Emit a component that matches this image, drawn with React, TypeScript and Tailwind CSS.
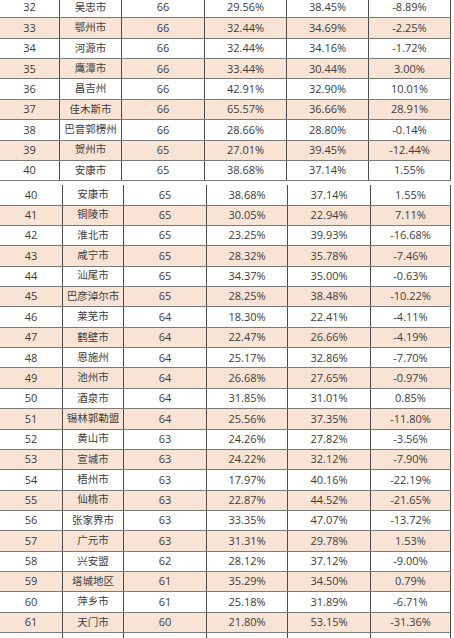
import React from "react";

type Row = [string, string, string, string, string, string];

const top: Row[] = [
  ["32", "吴忠市", "66", "29.56%", "38.45%", "-8.89%"],
  ["33", "鄂州市", "66", "32.44%", "34.69%", "-2.25%"],
  ["34", "河源市", "66", "32.44%", "34.16%", "-1.72%"],
  ["35", "鹰潭市", "66", "33.44%", "30.44%", "3.00%"],
  ["36", "昌吉州", "66", "42.91%", "32.90%", "10.01%"],
  ["37", "佳木斯市", "66", "65.57%", "36.66%", "28.91%"],
  ["38", "巴音郭楞州", "66", "28.66%", "28.80%", "-0.14%"],
  ["39", "贺州市", "65", "27.01%", "39.45%", "-12.44%"],
  ["40", "安康市", "65", "38.68%", "37.14%", "1.55%"],
];

const bottom: Row[] = [
  ["40", "安康市", "65", "38.68%", "37.14%", "1.55%"],
  ["41", "铜陵市", "65", "30.05%", "22.94%", "7.11%"],
  ["42", "淮北市", "65", "23.25%", "39.93%", "-16.68%"],
  ["43", "咸宁市", "65", "28.32%", "35.78%", "-7.46%"],
  ["44", "汕尾市", "65", "34.37%", "35.00%", "-0.63%"],
  ["45", "巴彦淖尔市", "65", "28.25%", "38.48%", "-10.22%"],
  ["46", "莱芜市", "64", "18.30%", "22.41%", "-4.11%"],
  ["47", "鹤壁市", "64", "22.47%", "26.66%", "-4.19%"],
  ["48", "恩施州", "64", "25.17%", "32.86%", "-7.70%"],
  ["49", "池州市", "64", "26.68%", "27.65%", "-0.97%"],
  ["50", "酒泉市", "64", "31.85%", "31.01%", "0.85%"],
  ["51", "锡林郭勒盟", "64", "25.56%", "37.35%", "-11.80%"],
  ["52", "黄山市", "63", "24.26%", "27.82%", "-3.56%"],
  ["53", "宣城市", "63", "24.22%", "32.12%", "-7.90%"],
  ["54", "梧州市", "63", "17.97%", "40.16%", "-22.19%"],
  ["55", "仙桃市", "63", "22.87%", "44.52%", "-21.65%"],
  ["56", "张家界市", "63", "33.35%", "47.07%", "-13.72%"],
  ["57", "广元市", "63", "31.31%", "29.78%", "1.53%"],
  ["58", "兴安盟", "62", "28.12%", "37.12%", "-9.00%"],
  ["59", "塔城地区", "61", "35.29%", "34.50%", "0.79%"],
  ["60", "萍乡市", "61", "25.18%", "31.89%", "-6.71%"],
  ["61", "天门市", "60", "21.80%", "53.15%", "-31.36%"],
];

function Cells({ r }: { r: Row }) {
  return (
    <>
      {r.map((c, i) => (
        <div
          key={i}
          className={
            "flex items-center justify-center border-r border-[#4a4a4a] " +
            (i === 1 ? "text-[10.5px]" : "text-[11px]")
          }
        >
          {c}
        </div>
      ))}
    </>
  );
}

export default function App() {
  return (
    <div
      className="w-[454px] h-[638px] overflow-hidden bg-white text-[#3c3c3c]"
      style={{ fontFamily: '"Open Sans", "Noto Sans CJK SC", sans-serif' }}
    >
      <div className="-mt-[2px] w-[451px]">
        {top.map((r, idx) => (
          <div
            key={idx}
            className={
              "grid grid-cols-[60px_62px_83px_82px_82px_82px] h-[20.36px] border-b border-[#7a7a7a] " +
              (idx % 2 === 1 ? "bg-[#f9e3d5]" : "bg-white")
            }
          >
            <Cells r={r} />
          </div>
        ))}
      </div>
      <div className="h-[4px]" />
      <div className="w-[451px]">
        {bottom.map((r, idx) => (
          <div
            key={idx}
            className={
              "grid grid-cols-[63px_61px_83px_81px_83px_80px] h-[20.36px] border-b border-[#7a7a7a] " +
              (idx % 2 === 1 ? "bg-[#f9e3d5]" : "bg-white")
            }
          >
            <Cells r={r} />
          </div>
        ))}
        <div className="grid grid-cols-[63px_61px_83px_81px_83px_80px] h-[20px] bg-white">
          <Cells r={["", "", "", "", "", ""]} />
        </div>
      </div>
    </div>
  );
}
